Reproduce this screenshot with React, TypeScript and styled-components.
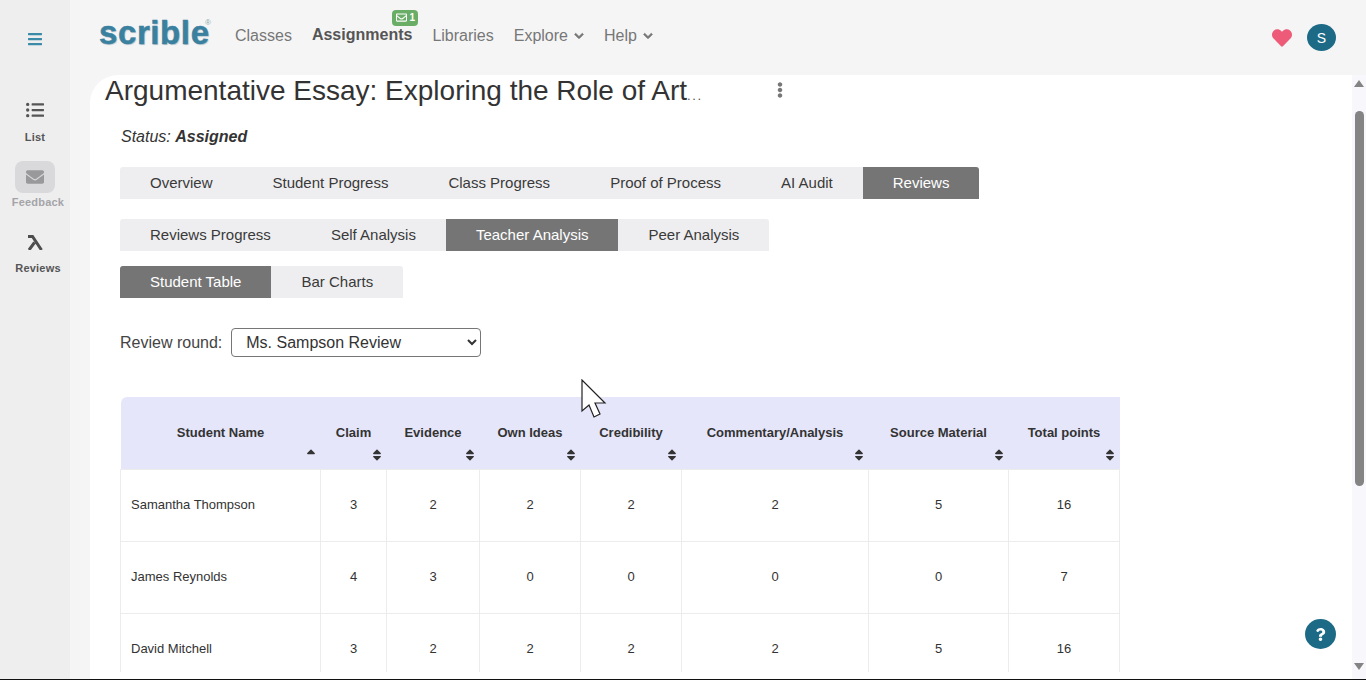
import React from "react";
import styled, { createGlobalStyle } from "styled-components";
import { FaHeart, FaBars, FaListUl, FaEnvelope, FaRegEnvelope, FaChevronDown, FaEllipsisV, FaQuestion, FaSortUp, FaSort } from "react-icons/fa";

const Global = createGlobalStyle`
  html, body { margin: 0; padding: 0; height: 680px; overflow: hidden; background: #f5f5f6; }
  * { box-sizing: border-box; }
  body { font-family: "Liberation Sans", Arial, sans-serif; color: #333; }
`;

const Page = styled.div`
  position: relative;
  display: flex;
  width: 1366px;
  height: 680px;
  border-bottom: 1px solid #111;
  overflow: hidden;
`;

const Sidebar = styled.aside`
  width: 70px;
  flex: none;
  background: #eeeeef;
  display: flex;
  flex-direction: column;
  align-items: center;
`;

const Burger = styled.div`
  height: 78px;
  display: flex;
  align-items: center;
  justify-content: center;
  color: #3a8aa8;
  font-size: 16px;
`;

const SideItem = styled.div<{ $faded?: boolean; $top: number; $offset?: number }>`
  display: flex;
  flex-direction: column;
  align-items: center;
  margin-top: ${(p) => p.$top}px;
  margin-left: ${(p) => p.$offset ?? 0}px;
  font-size: 11px;
  font-weight: 700;
  color: ${(p) => (p.$faded ? "#a4a4a8" : "#555")};
`;

const SideIcon = styled.div<{ $active?: boolean }>`
  width: 40px;
  height: 32px;
  border-radius: 8px;
  margin-left: ${(p) => (p.$active ? "-6px" : "0")};
  background: ${(p) => (p.$active ? "#d9d9dc" : "transparent")};
  display: flex;
  align-items: center;
  justify-content: center;
  color: ${(p) => (p.$active ? "#99999b" : "#555")};
  font-size: 18px;
`;

const Lambda = styled.svg`
  width: 15px;
  height: 15px;
  margin-right: 6px;
  margin-bottom: 2px;
  fill: none;
  stroke: #4d4d4d;
  stroke-width: 3;
`;

const SideLabel = styled.div<{ $gap: number }>`
  margin-top: ${(p) => p.$gap}px;
  line-height: 13px;
  letter-spacing: 0.2px;
`;

const Main = styled.div`
  flex: 1;
  min-width: 0;
  display: flex;
  flex-direction: column;
`;

const Header = styled.header`
  height: 75px;
  flex: none;
  display: flex;
  align-items: center;
  padding: 0 30px 4px 29px;
`;

const Logo = styled.div`
  position: relative;
  font-size: 33px;
  line-height: 40px;
  font-weight: 700;
  color: #3a809f;
  letter-spacing: 0.6px;
  width: 112px;
  margin-top: -6px;
  -webkit-text-stroke: 0.5px #3a809f;
  text-shadow: 1px 1px 1px #b9c6cd;
`;

const LogoMark = styled.span`
  position: absolute;
  left: 106px;
  top: 6px;
  font-size: 8px;
  line-height: 8px;
  color: #8aa;
  font-weight: 400;
  letter-spacing: 0;
  -webkit-text-stroke: 0;
  text-shadow: none;
`;

const Nav = styled.nav`
  display: flex;
  align-items: center;
  gap: 20px;
  margin-left: 24px;
  font-size: 16px;
  color: #777;
`;

const NavItem = styled.div<{ $bold?: boolean }>`
  position: relative;
  display: flex;
  align-items: center;
  gap: 6px;
  font-weight: ${(p) => (p.$bold ? 700 : 400)};
  color: ${(p) => (p.$bold ? "#555" : "#777")};
  margin-top: ${(p) => (p.$bold ? "-2px" : "0")};
  > svg { font-size: 10px; stroke: currentColor; stroke-width: 40; overflow: visible; }
`;

const Badge = styled.span`
  position: absolute;
  right: -6px;
  top: -16px;
  width: 26px;
  height: 16px;
  border-radius: 4px;
  background: #6aad66;
  color: #fff;
  font-size: 10px;
  font-weight: 700;
  display: flex;
  align-items: center;
  justify-content: center;
  gap: 3px;
  svg { font-size: 11px; }
`;

const HeaderRight = styled.div`
  margin-left: auto;
  display: flex;
  align-items: center;
  gap: 15px;
  margin-top: 4px;
  color: #ed5b78;
  font-size: 20px;
`;

const Avatar = styled.div`
  width: 29px;
  height: 27px;
  border-radius: 50%;
  background: #1c6a85;
  color: #fff;
  font-size: 14px;
  display: flex;
  align-items: center;
  justify-content: center;
`;

const Panel = styled.main`
  flex: 1;
  min-height: 0;
  margin-left: 20px;
  background: #fff;
  border-top-left-radius: 28px;
  display: flex;
  overflow: hidden;
`;

const Content = styled.div`
  flex: 1;
  min-width: 0;
  overflow: hidden;
  padding-left: 30px;
  margin-bottom: 7px;
`;

const Title = styled.div`
  display: flex;
  align-items: flex-start;
  margin-left: -15px;
`;

const TitleText = styled.h1`
  margin: 0;
  width: 598px;
  font-size: 28px;
  font-weight: 400;
  line-height: 32px;
  color: #333;
  white-space: nowrap;
`;

const TitleDots = styled.span`
  font-size: 13px;
  line-height: 1;
  letter-spacing: 1.6px;
  color: #555;
`;

const Kebab = styled.div`
  margin-left: 69px;
  margin-top: 7px;
  color: #777;
  font-size: 16px;
  line-height: 16px;
`;

const Status = styled.div`
  margin-top: 20px;
  margin-left: 1px;
  height: 20px;
  font-size: 16px;
  line-height: 20px;
  font-style: italic;
  color: #333;
  b { font-weight: 700; }
`;

const Tabs = styled.div<{ $top: number }>`
  display: inline-flex;
  margin-top: ${(p) => p.$top}px;
  background: #eeeef0;
  border-top-left-radius: 3px;
  border-top-right-radius: 3px;
  overflow: hidden;
`;

const TabRow = styled.div``;

const Tab = styled.div<{ $active?: boolean }>`
  height: 32px;
  padding: 0 30px 2px;
  display: flex;
  align-items: center;
  font-size: 15px;
  color: ${(p) => (p.$active ? "#fff" : "#3a3a3a")};
  background: ${(p) => (p.$active ? "#757575" : "transparent")};
`;

const RoundRow = styled.div`
  display: flex;
  align-items: center;
  margin-top: 30px;
  font-size: 16px;
  color: #444;
  gap: 9px;
`;

const RoundSelect = styled.select`
  width: 250px;
  height: 29px;
  border: 1px solid #767676;
  border-radius: 4px;
  background: #fff;
  padding: 0 0 0 10px;
  font-family: inherit;
  font-size: 16px;
  color: #333;
`;

const Table = styled.table`
  margin-top: 40px;
  border-collapse: collapse;
  table-layout: fixed;
  width: 999px;
  font-size: 13px;
  color: #333;
`;

const HeadRow = styled.tr`
  height: 72px;
  background: #e6e6fa;
`;

const Th = styled.th`
  position: relative;
  padding: 0;
  font-size: 13px;
  font-weight: 700;
  text-align: center;
  color: #333;
  &:first-child { border-top-left-radius: 6px; }
`;

const SortMark = styled.span`
  position: absolute;
  right: 3px;
  bottom: 7px;
  display: flex;
  color: #333;
  font-size: 14px;
`;

const Row = styled.tr`
  height: 72px;
`;

const Td = styled.td`
  border: 1px solid #ececec;
  text-align: center;
  padding: 0 0 2px;
`;

const NameTd = styled(Td)`
  text-align: left;
  padding-left: 10px;
`;

const Scrollbar = styled.div`
  width: 14px;
  flex: none;
  background: #f8f8fc;
  display: flex;
  flex-direction: column;
  align-items: center;
  margin-left: auto;
`;

const Arrow = styled.svg<{ $bottom?: number }>`
  width: 10px;
  height: 7px;
  flex: none;
  fill: #848484;
  margin: 5px 0 ${(p) => p.$bottom ?? 5}px;
`;

const Thumb = styled.div`
  width: 9px;
  height: 375px;
  margin-top: 19px;
  border-radius: 5px;
  background: #848484;
`;

const Spacer = styled.div`
  flex: 1;
`;

const HelpButton = styled.div`
  position: absolute;
  left: 1305px;
  top: 619px;
  width: 31px;
  height: 30px;
  border-radius: 50%;
  background: #1c6a85;
  color: #fff;
  font-size: 13px;
  display: flex;
  align-items: center;
  justify-content: center;
`;

const Pointer = styled.svg`
  position: absolute;
  left: 581px;
  top: 379px;
  width: 27px;
  height: 39px;
`;

const columns = ["Student Name", "Claim", "Evidence", "Own Ideas", "Credibility", "Commentary/Analysis", "Source Material", "Total points"];
const widths = [200, 66, 93, 101, 101, 187, 140, 111];
const rows: [string, ...number[]][] = [
  ["Samantha Thompson", 3, 2, 2, 2, 2, 5, 16],
  ["James Reynolds", 4, 3, 0, 0, 0, 0, 7],
  ["David Mitchell", 3, 2, 2, 2, 2, 5, 16],
];

export default function App() {
  return (
    <Page>
      <Global />
      <Sidebar>
        <Burger><FaBars /></Burger>
        <SideItem $top={16}>
          <SideIcon><FaListUl /></SideIcon>
          <SideLabel $gap={5}>List</SideLabel>
        </SideItem>
        <SideItem $top={17} $offset={6} $faded>
          <SideIcon $active><FaEnvelope /></SideIcon>
          <SideLabel $gap={3}>Feedback</SideLabel>
        </SideItem>
        <SideItem $top={18} $offset={6}>
          <SideIcon>
            <Lambda viewBox="0 0 15 15"><path d="M0 1.5h4.5L13.5 15M6.5 7.5L1 15" /></Lambda>
          </SideIcon>
          <SideLabel $gap={3}>Reviews</SideLabel>
        </SideItem>
      </Sidebar>
      <Main>
        <Header>
          <Logo>scrible<LogoMark>®</LogoMark></Logo>
          <Nav>
            <NavItem>Classes</NavItem>
            <NavItem $bold>
              Assignments
              <Badge><FaRegEnvelope />1</Badge>
            </NavItem>
            <NavItem>Libraries</NavItem>
            <NavItem>Explore <FaChevronDown /></NavItem>
            <NavItem>Help <FaChevronDown /></NavItem>
          </Nav>
          <HeaderRight>
            <FaHeart />
            <Avatar>S</Avatar>
          </HeaderRight>
        </Header>
        <Panel>
          <Content>
            <Title>
              <TitleText>Argumentative Essay: Exploring the Role of Art<TitleDots>...</TitleDots></TitleText>
              <Kebab><FaEllipsisV /></Kebab>
            </Title>
            <Status>Status: <b>Assigned</b></Status>
            <TabRow>
              <Tabs $top={20}>
                {["Overview", "Student Progress", "Class Progress", "Proof of Process", "AI Audit"].map((t) => <Tab key={t}>{t}</Tab>)}
                <Tab $active>Reviews</Tab>
              </Tabs>
            </TabRow>
            <TabRow>
              <Tabs $top={20}>
                <Tab>Reviews Progress</Tab>
                <Tab>Self Analysis</Tab>
                <Tab $active>Teacher Analysis</Tab>
                <Tab>Peer Analysis</Tab>
              </Tabs>
            </TabRow>
            <TabRow>
              <Tabs $top={15}>
                <Tab $active>Student Table</Tab>
                <Tab>Bar Charts</Tab>
              </Tabs>
            </TabRow>
            <RoundRow>
              Review round:
              <RoundSelect defaultValue="ms"><option value="ms">Ms. Sampson Review</option></RoundSelect>
            </RoundRow>
            <Table>
              <colgroup>{widths.map((w, i) => <col key={i} width={w} />)}</colgroup>
              <thead>
                <HeadRow>
                  {columns.map((c, i) => (
                    <Th key={c}>{c}<SortMark>{i === 0 ? <FaSortUp /> : <FaSort />}</SortMark></Th>
                  ))}
                </HeadRow>
              </thead>
              <tbody>
                {rows.map(([name, ...vals]) => (
                  <Row key={name}>
                    <NameTd>{name}</NameTd>
                    {vals.map((v, i) => <Td key={i}>{v}</Td>)}
                  </Row>
                ))}
              </tbody>
            </Table>
          </Content>
          <Scrollbar>
            <Arrow viewBox="0 0 10 7"><path d="M5 0l5 7H0z" /></Arrow>
            <Thumb />
            <Spacer />
            <Arrow viewBox="0 0 10 7" $bottom={9}><path d="M0 0h10L5 7z" /></Arrow>
          </Scrollbar>
        </Panel>
      </Main>
      <HelpButton><FaQuestion /></HelpButton>
      <Pointer viewBox="0 0 27 39">
        <path d="M1 1v31l7-6 5 12 6-3-5-11h10z" fill="#fff" stroke="#222" strokeWidth="1.2" />
      </Pointer>
    </Page>
  );
}
